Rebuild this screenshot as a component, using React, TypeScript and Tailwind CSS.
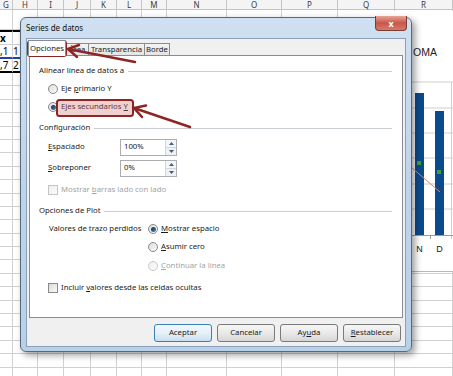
import type { ReactNode } from 'react';

const font = { fontFamily: '"Noto Sans", "Open Sans", sans-serif' };

const columns = [ 'G', 'H', 'I', 'J', 'K', 'L', 'M', 'N', 'O', 'P', 'Q', 'R' ];
const bodyRows = 28;

function Sheet() {
	const cells: ReactNode[] = [];
	columns.forEach( ( c ) =>
		cells.push(
			<div
				key={ 'h' + c }
				className="flex items-center justify-center border-r border-b border-[#c4c4c4] bg-[#f4f4f4] text-[8px] leading-none text-[#3a3a3a]"
			>
				{ c }
			</div>
		)
	);
	for ( let r = 0; r < bodyRows; r++ ) {
		columns.forEach( ( c, i ) => {
			let content: ReactNode = null;
			let extra = 'border-[#d0d0d0]';
			if ( r === 1 && i < 2 ) extra = 'border-[#d0d0d0] border-t-2 !border-t-black';
			if ( r === 2 && i < 2 ) extra = 'border-[#d0d0d0] !border-b-[#2b3fa8] border-b-2';
			if ( r === 3 && i < 2 ) extra = 'border-[#d0d0d0] !border-b-black border-b-2';
			if ( r === 1 && i === 0 ) content = <span className="font-bold">x</span>;
			if ( r === 2 && i === 0 ) content = ',1';
			if ( r === 3 && i === 0 ) content = ',7';
			if ( r === 2 && i === 1 ) content = '1';
			if ( r === 3 && i === 1 ) content = '2';
			cells.push(
				<div
					key={ r + c }
					className={ 'flex items-center border-r border-b text-[10px] leading-none text-black ' + extra }
				>
					{ content }
				</div>
			);
		} );
	}
	return (
		<div
			className="grid grid-cols-[13px_25px_26px_27px_26px_25px_25px_60px_55px_56px_57px_58px] grid-rows-[10px_20px_15px_14px_14px] auto-rows-[13.4px]"
			style={ font }
		>
			{ cells }
		</div>
	);
}

function Chart() {
	return (
		<div className="absolute left-[380px] top-[11px] w-[73px] h-[261px] bg-white border-b border-[#b8b8b8]">
			<svg width="73" height="261" viewBox="0 0 73 261">
				<text x="33" y="45" fontSize="10.5" fill="#222" fontFamily="Liberation Sans, sans-serif">
					OMA
				</text>
				{ [ 71, 97, 122, 147, 173, 198 ].map( ( y ) => (
					<line key={ y } x1="30" x2="73" y1={ y } y2={ y } stroke="#cfcfcf" strokeWidth="1" />
				) ) }
				<line x1="71.5" x2="71.5" y1="71" y2="228" stroke="#cfcfcf" />
				<rect x="35" y="82" width="9" height="142" fill="#0b4a8c" />
				<rect x="55" y="100" width="9" height="124" fill="#0b4a8c" />
				<line x1="30" x2="73" y1="224.5" y2="224.5" stroke="#9a9a9a" />
				<line x1="50.5" x2="50.5" y1="224" y2="228" stroke="#9a9a9a" />
				<line x1="31" y1="156" x2="60" y2="181" stroke="#d98a6a" strokeWidth="1" />
				<rect x="37" y="150" width="4" height="4" fill="#3aa23a" />
				<rect x="57" y="159" width="4" height="4" fill="#3aa23a" />
				<text x="39.5" y="241" fontSize="9" textAnchor="middle" fill="#222" fontFamily="Liberation Sans, sans-serif">
					N
				</text>
				<text x="59.5" y="241" fontSize="9" textAnchor="middle" fill="#222" fontFamily="Liberation Sans, sans-serif">
					D
				</text>
			</svg>
		</div>
	);
}

function Radio( { checked, disabled }: { checked?: boolean; disabled?: boolean } ) {
	return (
		<span
			className={
				'flex h-[10px] w-[10px] shrink-0 items-center justify-center rounded-full border bg-gradient-to-br ' +
				( disabled
					? 'border-[#c8c8c8] from-[#f0f0f0] to-[#fbfbfb]'
					: 'border-[#8a8a8a] from-[#dcdcdc] to-[#fafafa]' )
			}
		>
			{ checked && (
				<span className="h-[5px] w-[5px] rounded-full bg-gradient-to-br from-[#0d2a4a] to-[#3d8fd0]" />
			) }
		</span>
	);
}

function Check( { disabled }: { disabled?: boolean } ) {
	return (
		<span
			className={
				'h-[10px] w-[10px] shrink-0 border bg-gradient-to-br ' +
				( disabled
					? 'border-[#c4c4c4] from-[#efefef] to-[#fbfbfb]'
					: 'border-[#8a8a8a] from-[#dadada] to-[#fafafa]' )
			}
		/>
	);
}

function GroupHeader( { label }: { label: string } ) {
	return (
		<div className="flex h-[18px] items-center gap-[4px] pl-[9px] pr-[10px]">
			<span>{ label }</span>
			<span className="h-px flex-1 bg-[#c9ced3]" />
		</div>
	);
}

function SpinBox( { value }: { value: string } ) {
	return (
		<div className="flex h-[17px] w-[57px] border border-[#abadb3] bg-white">
			<span className="flex flex-1 items-center pl-[3px]">{ value }</span>
			<span className="flex w-[11px] flex-col border-l border-[#d4d7dc]">
				<span className="flex flex-1 items-center justify-center border-b border-[#d4d7dc] bg-[#f3f5f8]">
					<svg width="5" height="3" viewBox="0 0 5 3">
						<path d="M0 3 L2.5 0 L5 3 Z" fill="#4a5a78" />
					</svg>
				</span>
				<span className="flex flex-1 items-center justify-center bg-[#eef1f5]">
					<svg width="5" height="3" viewBox="0 0 5 3">
						<path d="M0 0 L2.5 3 L5 0 Z" fill="#4a5a78" />
					</svg>
				</span>
			</span>
		</div>
	);
}

function Button( { children, primary }: { children: ReactNode; primary?: boolean } ) {
	return (
		<div
			className={
				'flex h-[18px] w-[58px] items-center justify-center rounded-[3px] border ' +
				( primary
					? 'border-[#3c7fb1] bg-gradient-to-b from-[#f2f8fc] via-[#e6f0f8] to-[#c9dff0]'
					: 'border-[#7a7a7a] bg-gradient-to-b from-[#f6f6f6] via-[#e9e9e9] to-[#d5d5d5]' )
			}
		>
			{ children }
		</div>
	);
}

function Tab( { label, width, active }: { label: ReactNode; width: string; active?: boolean } ) {
	return (
		<div
			className={
				'flex items-center justify-center border border-b-0 border-[#898c95] ' +
				width +
				( active ? ' h-[16px] bg-white z-10' : ' h-[13px] -ml-px bg-gradient-to-b from-[#f3f3f3] to-[#e3e3e3]' )
			}
		>
			{ label }
		</div>
	);
}

function Dialog() {
	return (
		<div
			className="absolute left-[20px] top-[17px] flex h-[335px] w-[392px] flex-col rounded-[6px] border border-[#5b6878] bg-gradient-to-b from-[#cfe0f2] via-[#bed4ec] to-[#b9d0ea] shadow-[3px_3px_7px_rgba(0,0,0,0.4)]"
			style={ font }
		>
			<div className="flex h-[20px] items-center justify-between pl-[5px] pr-[4px] text-[8px] text-[#111]">
				<span>Series de datos</span>
				<span className="-mt-[2px] flex h-[15px] w-[32px] items-center justify-center self-start rounded-b-[4px] border border-t-0 border-[#7b3a33] bg-gradient-to-b from-[#e8a596] via-[#c8564a] to-[#d57a68] text-[9px] font-bold leading-none text-white">
					x
				</span>
			</div>
			<div className="mx-[5px] flex h-[309px] flex-col border border-[#8aa0b8] bg-[#f0f0f0] text-[7.75px] text-[#1b1b1b]">
				<div className="flex h-[17px] items-end pl-px">
					<Tab label="Opciones" width="w-[38px]" active />
					<Tab label="Área" width="w-[24px]" />
					<Tab label="Transparencia" width="w-[57px]" />
					<Tab label="Borde" width="w-[26px]" />
				</div>
				<div className="mx-[2px] -mt-px flex h-[263px] flex-col border border-[#898c95] bg-white">
					<div className="mt-[6px]">
						<GroupHeader label="Alinear línea de datos a" />
					</div>
					<div className="flex h-[18px] items-center gap-[3px] pl-[18px]">
						<Radio />
						<span>
							Eje <span className="underline">p</span>rimario Y
						</span>
					</div>
					<div className="flex h-[18px] items-center gap-[3px] pl-[18px]">
						<Radio checked />
						<span>
							Ejes secundarios <span className="underline">Y</span>
						</span>
					</div>
					<div className="mt-[3px]">
						<GroupHeader label="Configuración" />
					</div>
					<div className="mt-px flex h-[18px] items-center pl-[18px]">
						<span className="w-[72px]">
							<span className="underline">E</span>spaciado
						</span>
						<SpinBox value="100%" />
					</div>
					<div className="mt-[3px] flex h-[18px] items-center pl-[18px]">
						<span className="w-[72px]">
							<span className="underline">S</span>obreponer
						</span>
						<SpinBox value="0%" />
					</div>
					<div className="mt-[4px] flex h-[18px] items-center gap-[3px] pl-[18px] text-[#a3a3a3]">
						<Check disabled />
						<span>
							Mostrar <span className="underline">b</span>arras lado con lado
						</span>
					</div>
					<div className="mt-[3px]">
						<GroupHeader label="Opciones de Plot" />
					</div>
					<div className="flex h-[18px] items-center pl-[19px]">
						<span className="w-[99px]">Valores de trazo perdidos</span>
						<Radio checked />
						<span className="ml-[3px]">
							<span className="underline">M</span>ostrar espacio
						</span>
					</div>
					<div className="flex h-[18px] items-center pl-[118px]">
						<Radio />
						<span className="ml-[3px]">
							<span className="underline">A</span>sumir cero
						</span>
					</div>
					<div className="mt-px flex h-[18px] items-center pl-[118px] text-[#a3a3a3]">
						<Radio disabled />
						<span className="ml-[3px]">
							<span className="underline">C</span>ontinuar la línea
						</span>
					</div>
					<div className="mt-[4px] flex h-[18px] items-center gap-[3px] pl-[18px]">
						<Check />
						<span>
							Incluir <span className="underline">v</span>alores desde las celdas ocultas
						</span>
					</div>
				</div>
				<div className="flex flex-1 items-center justify-end gap-[5px] pr-[4px] pt-px">
					<Button primary>Aceptar</Button>
					<Button>Cancelar</Button>
					<Button>
						<span>
							Ay<span className="underline">u</span>da
						</span>
					</Button>
					<Button>
						<span>
							<span className="underline">R</span>establecer
						</span>
					</Button>
				</div>
			</div>
		</div>
	);
}

function Annotations() {
	const red = '#8e2424';
	return (
		<svg className="pointer-events-none absolute left-0 top-0" width="453" height="376" viewBox="0 0 453 376">
			<rect x="28" y="41" width="38" height="15" rx="2.5" fill="rgba(210,110,110,0.32)" stroke={ red } strokeWidth="2" />
			<rect x="57" y="100" width="76" height="16" rx="2.5" fill="rgba(210,110,110,0.32)" stroke={ red } strokeWidth="2" />
			<g stroke={ red } strokeWidth="2.5" strokeLinecap="round" fill="none">
				<line x1="135" y1="62" x2="68" y2="49" />
				<polyline points="79,45 68,49 77,57" />
				<line x1="190" y1="127" x2="134" y2="108" />
				<polyline points="146,105.5 134,108 142,117" />
			</g>
		</svg>
	);
}

export default function App() {
	return (
		<div className="relative h-[376px] w-[453px] overflow-hidden bg-white">
			<Sheet />
			<Chart />
			<Dialog />
			<Annotations />
		</div>
	);
}
